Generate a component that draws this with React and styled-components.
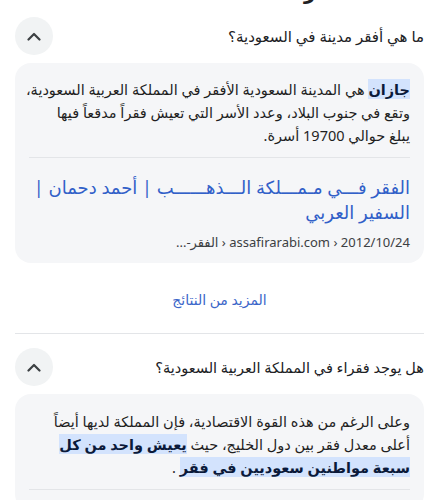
import React from 'react';
import styled, { createGlobalStyle } from 'styled-components';

const Global = createGlobalStyle`
  html, body { margin: 0; padding: 0; background: #fff; }
  body { font-family: "Noto Sans", "DejaVu Sans", sans-serif; color: #202124; }
`;

const Page = styled.div`
  width: 439px;
  padding: 0 15px;
  box-sizing: border-box;
  direction: rtl;
`;

const Peek = styled.div`
  height: 5px;
  overflow: hidden;
`;

const PeekText = styled.div`
  font-weight: 700;
  font-size: 20px;
  line-height: 20px;
  margin-top: -18px;
  padding-right: 80px;
`;

const Question = styled.div`
  display: flex;
  align-items: center;
  justify-content: space-between;
  height: 38px;
  margin-top: ${p => p.$top || 0}px;
`;

const QText = styled.div`
  font-size: ${p => p.$size || 15}px;
  line-height: 20px;
  color: #202124;
`;

const Toggle = styled.div`
  width: 38px;
  height: 38px;
  border-radius: 50%;
  background: #f1f3f4;
  display: flex;
  align-items: center;
  justify-content: center;
`;

const Card = styled.div`
  margin-top: 8px;
  background: #f5f6f8;
  border-radius: 16px;
  padding: ${p => p.$pad || '15px 14px 12px'};
`;

const Body = styled.p`
  margin: 0;
  font-size: 14.5px;
  line-height: 23px;
  color: #1f1f1f;
  white-space: nowrap;
`;

const Mark = styled.span`
  background: #d3e3fd;
  font-weight: ${p => (p.$bold ? 700 : 400)};
  color: #0b1a3a;
`;

const Rule = styled.div`
  height: 1px;
  background: #e3e5e8;
  margin: ${p => p.$m || '0'};
`;

const Link = styled.a`
  display: block;
  font-size: 18px;
  line-height: 25px;
  color: #3160c8;
  text-decoration: none;
  margin-top: 17px;
  white-space: nowrap;
`;

const Cite = styled.div`
  font-size: 13px;
  line-height: 18px;
  color: #3c4043;
  margin-top: 8px;
`;

const More = styled.div`
  text-align: center;
  font-size: 14px;
  line-height: 20px;
  color: #3b66c9;
  padding: 27px 0 23px;
`;

const Chevron = () => (
  <svg width="14" height="9" viewBox="0 0 14 9" fill="none">
    <path d="M1.5 7.5L7 2l5.5 5.5" stroke="#3c4043" strokeWidth="2.2" strokeLinecap="round" strokeLinejoin="round" />
  </svg>
);

export default function App() {
  return (
    <>
      <Global />
      <Page>
        <Peek>
          <PeekText>فقر</PeekText>
        </Peek>
        <Question $top={12}>
          <QText>ما هي أفقر مدينة في السعودية؟</QText>
          <Toggle><Chevron /></Toggle>
        </Question>
        <Card>
          <Body>
            <Mark $bold>جازان</Mark> هي المدينة السعودية الأفقر في المملكة العربية السعودية،<br />
            وتقع في جنوب البلاد، وعدد الأسر التي تعيش فقراً مدقعاً فيها<br />
            يبلغ حوالي 19700 أسرة.
          </Body>
          <Rule $m="10px 0 0" />
          <Link href="#">الفقر فـــي مـمـــلكة الـــذهــــــب | أحمد دحمان |<br />السفير العربي</Link>
          <Cite>2012/10/24 ‹ assafirarabi.com ‹ الفقر-...</Cite>
        </Card>
        <More>المزيد من النتائج</More>
        <Rule />
        <Question $top={14}>
          <QText $size={14.5}>هل يوجد فقراء في المملكة العربية السعودية؟</QText>
          <Toggle><Chevron /></Toggle>
        </Question>
        <Card $pad="16px 14px 20px">
          <Body>
            وعلى الرغم من هذه القوة الاقتصادية، فإن المملكة لديها أيضاً<br />
            أعلى معدل فقر بين دول الخليج، حيث <Mark $bold>يعيش واحد من كل<br />
            سبعة مواطنين سعوديين في فقر</Mark> .
          </Body>
          <Rule $m="10px 0 0" />
        </Card>
      </Page>
    </>
  );
}
